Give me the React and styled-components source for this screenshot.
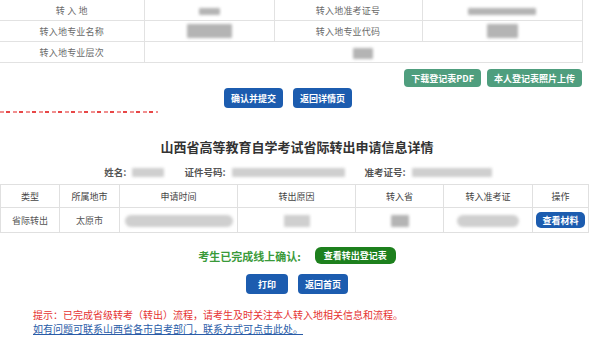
import React from "react";
import styled, { createGlobalStyle } from "styled-components";

const GlobalStyle = createGlobalStyle`
  body {
    margin: 0;
    background: #fff;
    font-family: "Noto Sans CJK SC", "Noto Sans", sans-serif;
  }
`;

const topRows = [
  [
    { label: "转 入 地", blur: [21, 7] },
    { label: "转入地准考证号", blur: [68, 7] },
  ],
  [
    { label: "转入地专业名称", blur: [45, 14] },
    { label: "转入地专业代码", blur: [31, 14] },
  ],
];

const heads = [
  { title: "类型", w: 59 },
  { title: "所属地市", w: 60 },
  { title: "申请时间", w: 118 },
  { title: "转出原因", w: 118 },
  { title: "转入省", w: 88 },
  { title: "转入准考证", w: 89 },
  { title: "操作", w: 56 },
];

function App() {
  return (
    <>
      <GlobalStyle />
      <Page>
        <InfoTable>
          <colgroup>
            <col style={{ width: 144 }} />
            <col style={{ width: 130 }} />
            <col style={{ width: 148 }} />
            <col style={{ width: 160 }} />
          </colgroup>
          <tbody>
            {topRows.map((row, i) => (
              <tr key={i}>
                {row.map((c) => (
                  <React.Fragment key={c.label}>
                    <Label>{c.label}</Label>
                    <Value>
                      <Blur w={c.blur[0]} h={c.blur[1]} />
                    </Value>
                  </React.Fragment>
                ))}
              </tr>
            ))}
            <tr>
              <Label>转入地专业层次</Label>
              <Value colSpan={3}>
                <Blur w={20} h={11} />
              </Value>
            </tr>
          </tbody>
        </InfoTable>

        <RightRow>
          <GreenButton>下载登记表PDF</GreenButton>
          <GreenButton>本人登记表照片上传</GreenButton>
        </RightRow>

        <CenterRow $shift={18}>
          <BlueButton>确认并提交</BlueButton>
          <BlueButton>返回详情页</BlueButton>
        </CenterRow>

        <ClippedNote />

        <Title>山西省高等教育自学考试省际转出申请信息详情</Title>

        <InfoLine>
          <span>姓名:</span>
          <Blur w={32} h={9} $light />
          <span>证件号码:</span>
          <Blur w={113} h={9} $light />
          <span>准考证号:</span>
          <Blur w={80} h={9} $light />
        </InfoLine>

        <ListTable>
          <colgroup>
            {heads.map((h) => (
              <col key={h.title} style={{ width: h.w }} />
            ))}
          </colgroup>
          <thead>
            <tr>
              {heads.map((h) => (
                <Th key={h.title}>{h.title}</Th>
              ))}
            </tr>
          </thead>
          <tbody>
            <tr>
              <Td>省际转出</Td>
              <Td>太原市</Td>
              <Td>
                <Blur w={108} h={12} $light $round />
              </Td>
              <Td>
                <Blur w={26} h={12} $light />
              </Td>
              <Td>
                <Blur w={18} h={12} />
              </Td>
              <Td>
                <Blur w={62} h={12} $light $round />
              </Td>
              <Td>
                <SmallButton>查看材料</SmallButton>
              </Td>
            </tr>
          </tbody>
        </ListTable>

        <ConfirmRow>
          <ConfirmText>考生已完成线上确认:</ConfirmText>
          <DarkGreenButton>查看转出登记表</DarkGreenButton>
        </ConfirmRow>

        <CenterRow $top={10}>
          <BlueButton $wide>打印</BlueButton>
          <BlueButton>返回首页</BlueButton>
        </CenterRow>

        <Notes>
          <RedNote>提示：已完成省级转考（转出）流程，请考生及时关注本人转入地相关信息和流程。</RedNote>
          <LinkNote href="#">如有问题可联系山西省各市自考部门，联系方式可点击此处。</LinkNote>
        </Notes>
      </Page>
    </>
  );
}

export default App;

const Page = styled.div`
  width: 594px;
  height: 341px;
  overflow: hidden;
`;

const InfoTable = styled.table`
  width: 582px;
  border-collapse: collapse;
  table-layout: fixed;
  font-size: 9px;
  color: #6a6a6a;
  td {
    border: 1px solid #e2e2e2;
    height: 20px;
    padding: 0;
    text-align: center;
    vertical-align: middle;
  }
  tr:first-child td {
    border-top: none;
  }
  td:first-child {
    border-left: none;
  }
`;

const Label = styled.td`
  letter-spacing: 0.2px;
`;

const Value = styled.td``;

const Blur = styled.span`
  display: inline-block;
  vertical-align: middle;
  width: ${(p) => p.w}px;
  height: ${(p) => p.h}px;
  background: ${(p) => (p.$light ? "#cfcfcf" : "#b4b4b4")};
  border-radius: ${(p) => (p.$round ? "6px" : "1px")};
  filter: blur(1.6px);
`;

const RightRow = styled.div`
  display: flex;
  justify-content: flex-end;
  gap: 6px;
  width: 582px;
  margin-top: 6px;
`;

const Button = styled.span`
  display: inline-flex;
  align-items: center;
  justify-content: center;
  height: 19px;
  padding: 0 7px;
  border-radius: 4px;
  color: #fff;
  font-size: 9px;
  font-weight: 700;
  white-space: nowrap;
`;

const GreenButton = styled(Button)`
  background: #4f9e7e;
  height: 18px;
`;

const BlueButton = styled(Button)`
  background: #1c5caf;
  height: 20px;
  padding: 0 ${(p) => (p.$wide ? "12px" : "7px")};
`;

const DarkGreenButton = styled(Button)`
  background: #1d801d;
  height: 17px;
  border-radius: 6px;
  padding: 0 9px;
`;

const SmallButton = styled(Button)`
  background: #1c5caf;
  height: 16px;
  border-radius: 5px;
  padding: 0 6px;
`;

const CenterRow = styled.div`
  display: flex;
  justify-content: center;
  gap: 10px;
  margin-top: ${(p) => (p.$top ? `${p.$top}px` : "1px")};
  padding-right: ${(p) => (p.$shift ? `${p.$shift}px` : "0")};
`;

const ClippedNote = styled.div`
  width: 158px;
  height: 2px;
  margin-top: 3px;
  background: repeating-linear-gradient(
    90deg,
    rgba(229, 51, 51, 0.55) 0 4px,
    transparent 4px 6px,
    rgba(229, 51, 51, 0.9) 6px 10px,
    transparent 10px 13px
  );
`;

const Title = styled.h1`
  margin: 26px 0 0;
  text-align: center;
  font-size: 13px;
  line-height: 16px;
  font-weight: 700;
  color: #333;
`;

const InfoLine = styled.div`
  display: flex;
  align-items: center;
  justify-content: center;
  gap: 6px;
  margin-top: 11px;
  padding-left: 2px;
  font-size: 9.5px;
  font-weight: 700;
  color: #555;
  line-height: 12px;
  & > span:nth-child(3),
  & > span:nth-child(5) {
    margin-left: 14px;
  }
`;

const ListTable = styled.table`
  width: 588px;
  margin-top: 6px;
  border-collapse: collapse;
  table-layout: fixed;
  font-size: 9px;
  color: #555;
  th,
  td {
    border: 1px solid #e0e0e0;
    padding: 0;
    text-align: center;
    vertical-align: middle;
  }
`;

const Th = styled.th`
  height: 22px;
  font-weight: 400;
  color: #444;
`;

const Td = styled.td`
  height: 24px;
`;

const ConfirmRow = styled.div`
  display: flex;
  align-items: center;
  justify-content: center;
  gap: 14px;
  margin-top: 14px;
`;

const ConfirmText = styled.span`
  color: #3a9a3a;
  font-size: 11px;
  font-weight: 700;
`;

const Notes = styled.div`
  margin-top: 14px;
  padding-left: 33px;
  font-size: 10px;
  line-height: 14px;
`;

const RedNote = styled.div`
  color: #e53333;
`;

const LinkNote = styled.a`
  display: block;
  color: #2a5ca8;
  text-decoration: underline;
`;
